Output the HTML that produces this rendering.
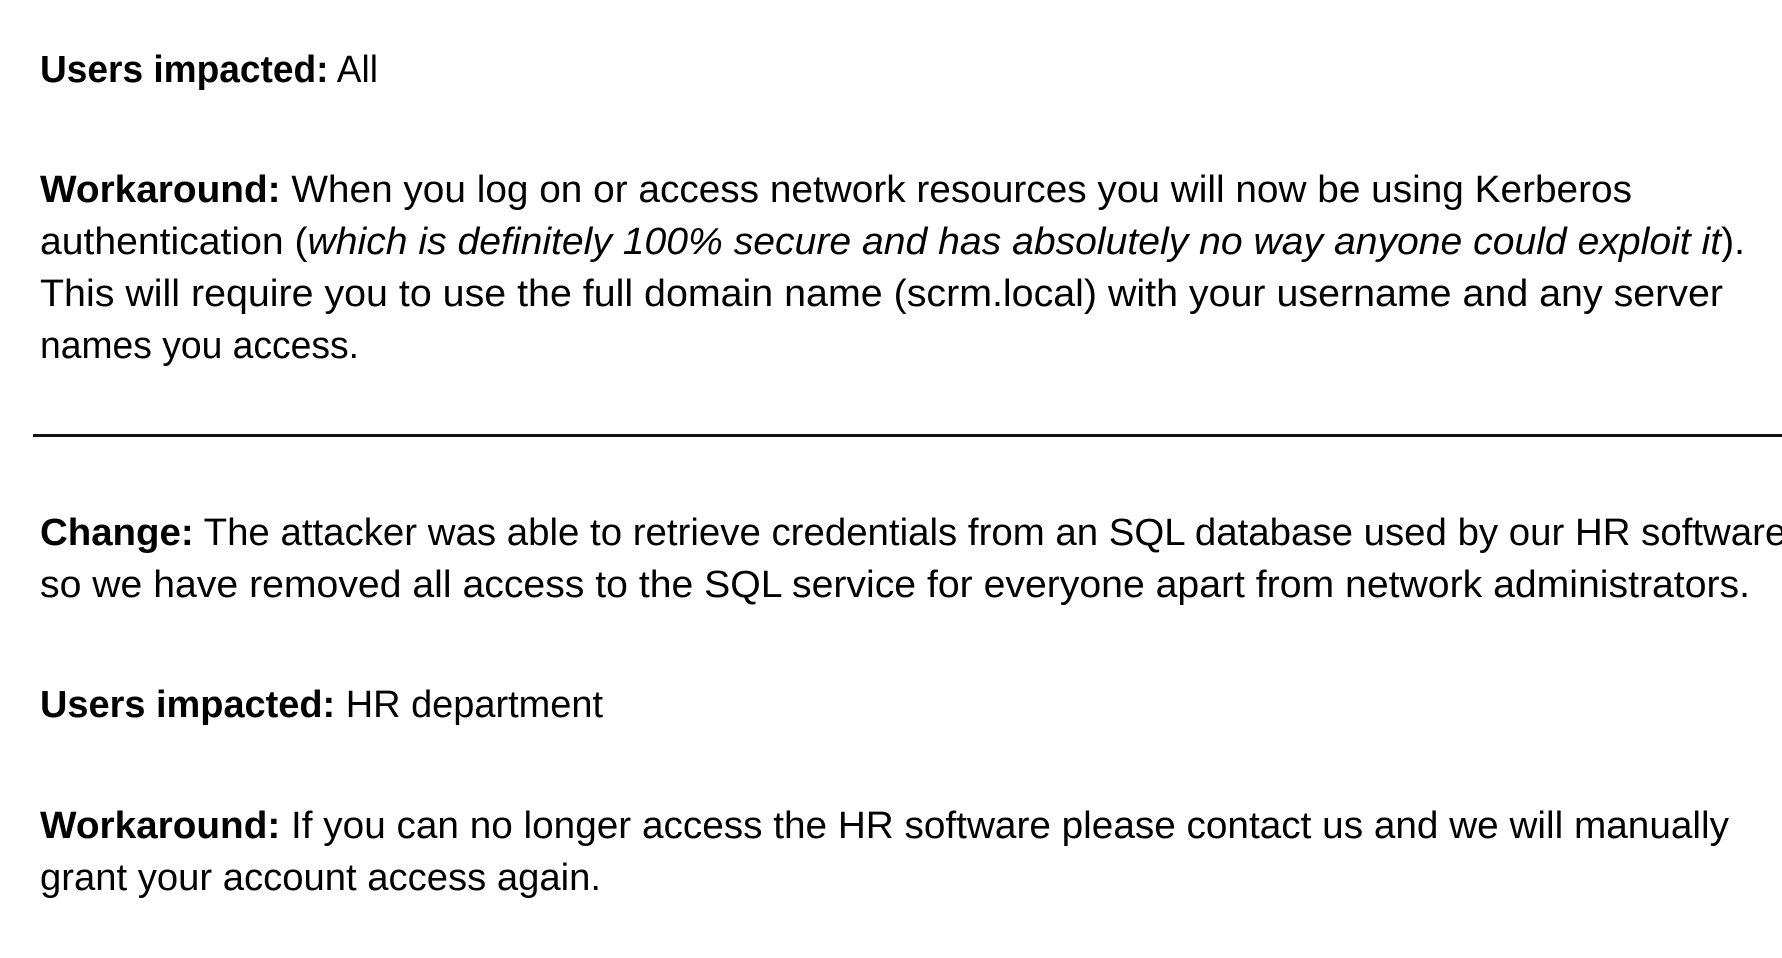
<!DOCTYPE html>
<html><head><meta charset="utf-8"><style>
html,body{margin:0;padding:0;background:#fff;width:1782px;height:958px;overflow:hidden}
svg{display:block}
text{font-family:"Liberation Sans",sans-serif;font-size:38px;fill:#000}
.b{font-weight:bold}
.i{font-style:italic}
</style></head><body>
<svg width="1782" height="958" viewBox="0 0 1782 958">
<text x="40" y="82" textLength="338" lengthAdjust="spacingAndGlyphs"><tspan class="b">Users impacted:</tspan> All</text>
<text x="40" y="202" textLength="1592" lengthAdjust="spacingAndGlyphs"><tspan class="b">Workaround:</tspan> When you log on or access network resources you will now be using Kerberos</text>
<text x="40" y="254" textLength="1705" lengthAdjust="spacingAndGlyphs">authentication (<tspan class="i">which is definitely 100% secure and has absolutely no way anyone could exploit it</tspan>).</text>
<text x="40" y="306" textLength="1683" lengthAdjust="spacingAndGlyphs">This will require you to use the full domain name (scrm.local) with your username and any server</text>
<text x="40" y="358" textLength="319" lengthAdjust="spacingAndGlyphs">names you access.</text>
<rect x="33" y="434" width="1749" height="3" fill="#111"/>
<text x="40" y="545" textLength="1757" lengthAdjust="spacingAndGlyphs"><tspan class="b">Change:</tspan> The attacker was able to retrieve credentials from an SQL database used by our HR software,</text>
<text x="40" y="597" textLength="1710" lengthAdjust="spacingAndGlyphs">so we have removed all access to the SQL service for everyone apart from network administrators.</text>
<text x="40" y="717" textLength="563" lengthAdjust="spacingAndGlyphs"><tspan class="b">Users impacted:</tspan> HR department</text>
<text x="40" y="838" textLength="1689" lengthAdjust="spacingAndGlyphs"><tspan class="b">Workaround:</tspan> If you can no longer access the HR software please contact us and we will manually</text>
<text x="40" y="890" textLength="561" lengthAdjust="spacingAndGlyphs">grant your account access again.</text>
</svg>
</body></html>
